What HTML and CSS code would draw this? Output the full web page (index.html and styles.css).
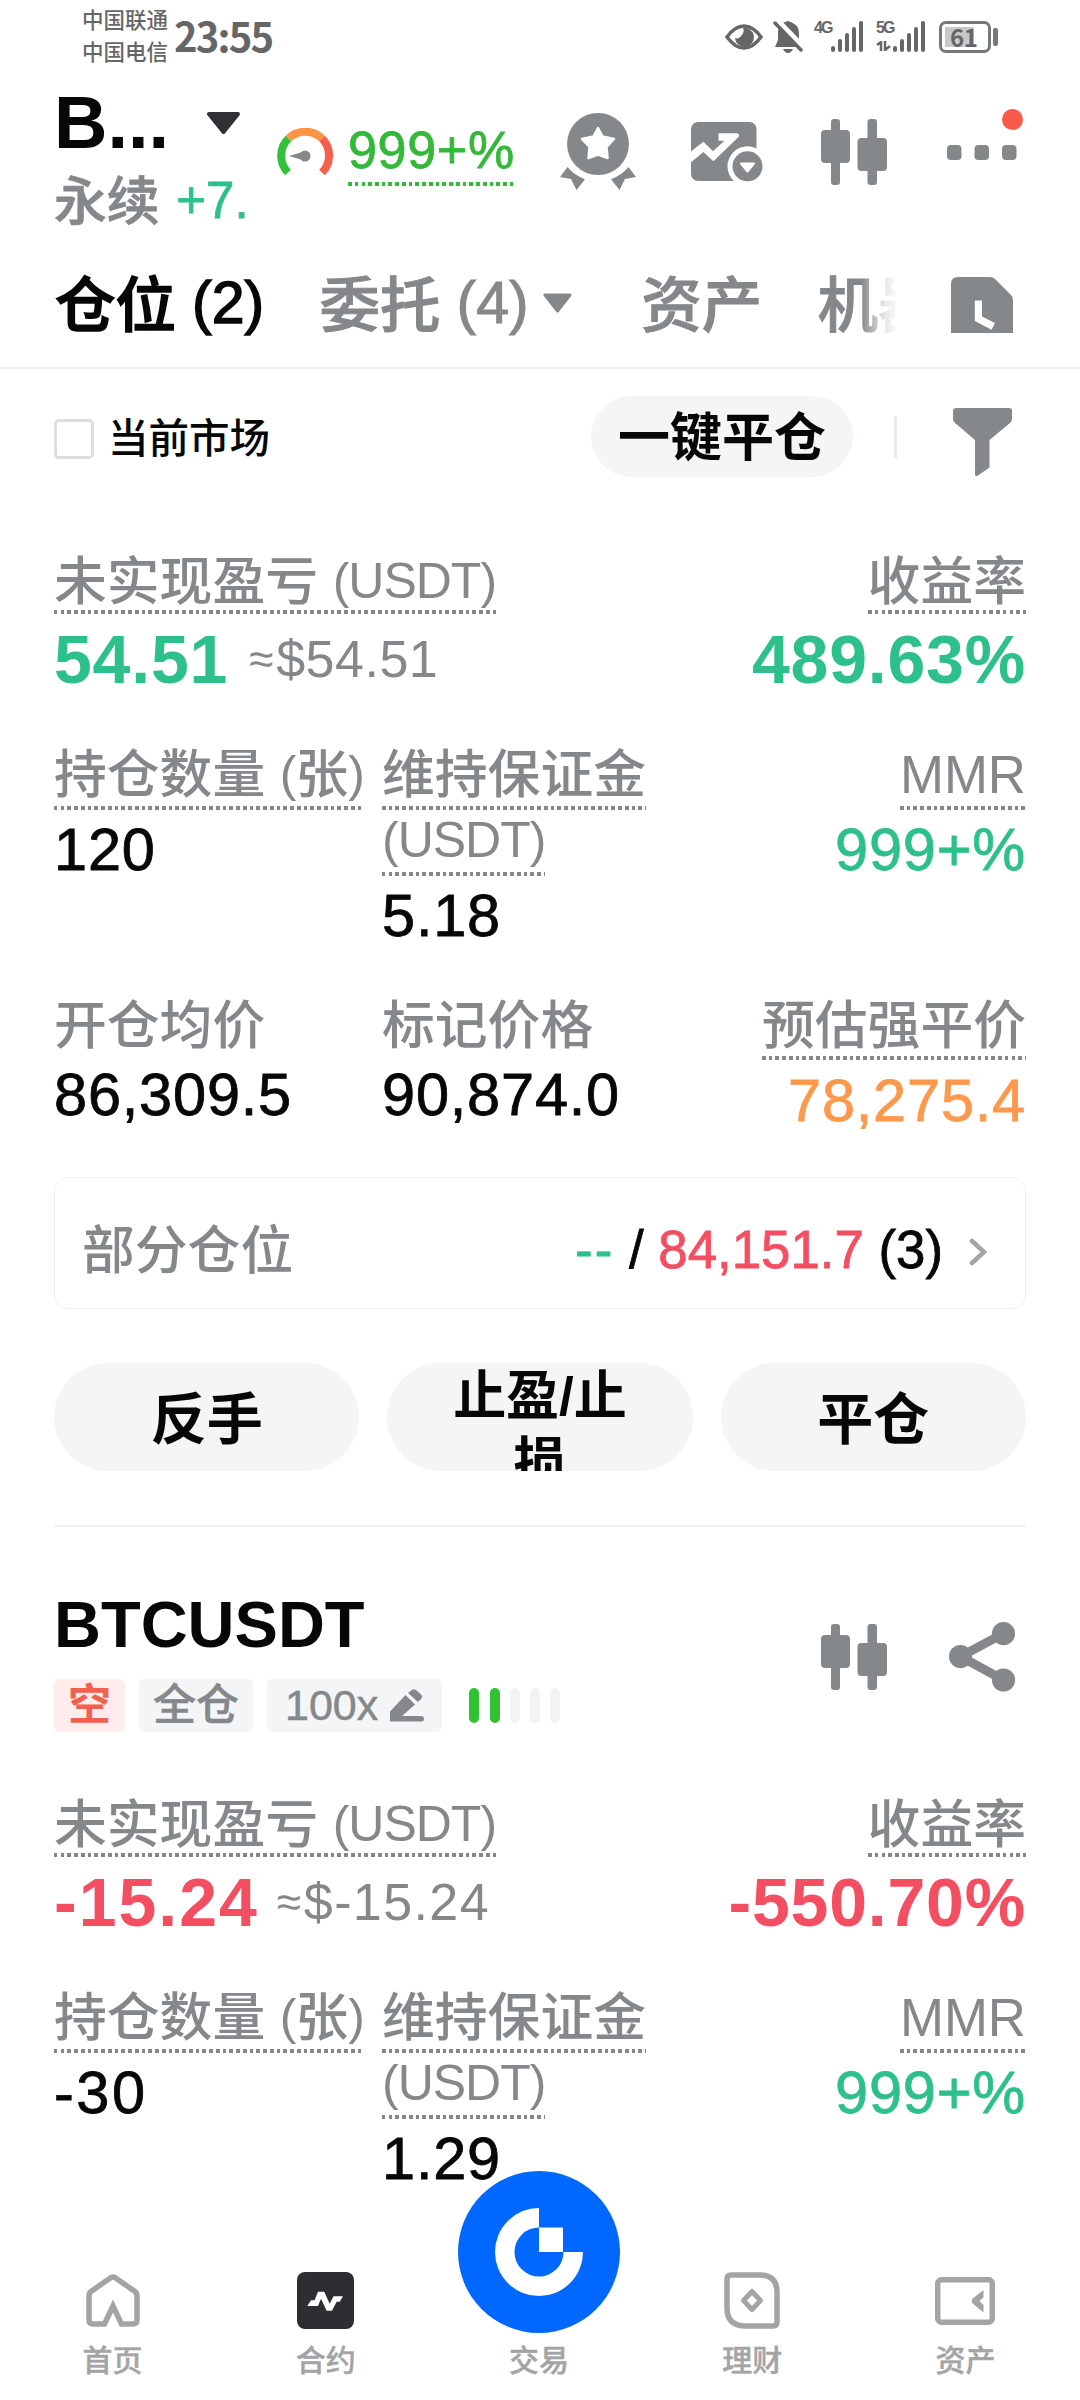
FILE: index.html
```html
<!DOCTYPE html>
<html lang="zh-CN">
<head>
    <meta charset="UTF-8">
    <meta name="viewport" content="width=device-width, initial-scale=1.0">
    <title>合约仓位</title>
    <link rel="stylesheet" href="styles.css">
</head>
<body>
    <!-- Shared icons -->
    <svg width="0" height="0" class="defs">
        <symbol id="candles" viewBox="0 0 66 66">
            <rect x="10" y="0" width="9" height="66" rx="3"/>
            <rect x="0" y="11" width="29" height="33" rx="4"/>
            <rect x="46.5" y="0" width="9.5" height="66" rx="3"/>
            <rect x="36.5" y="19" width="29.5" height="33" rx="4"/>
        </symbol>
        <symbol id="bars" viewBox="0 0 33 31">
            <rect x="0" y="25" width="4" height="6" rx="2"/>
            <rect x="7" y="18" width="4" height="13" rx="2"/>
            <rect x="14" y="12" width="4" height="19" rx="2"/>
            <rect x="21" y="6" width="4" height="25" rx="2"/>
            <rect x="28" y="0" width="4" height="31" rx="2"/>
        </symbol>
    </svg>

    <div class="status-bar">
        <div class="carriers">
            <div>中国联通</div>
            <div>中国电信</div>
        </div>
        <div class="clock">23:55</div>
        <div class="status-icons">
            <svg width="38" height="26" viewBox="0 0 38 26">
                <path class="outline" d="M2 13 Q10 2 19 2 T36 13 Q28 24 19 24 T2 13Z" stroke="#666" stroke-width="3.5"/>
                <path d="M18 4 A9.500 9.500 0 1 1 10 14 Q14 15.500 16 12 Q20 8 18 4Z"/>
            </svg>
            <svg class="bell" width="30" height="33" viewBox="0 0 30 33">
                <path d="M2 27 L5 20 V12 Q5 3 15 1 Q26 4 26 13 V20 L28 27Z"/>
                <path d="M10 29 H20 Q18 33 15 33 T10 29Z"/>
                <path d="M3 0 L30 28" stroke="#fff" stroke-width="7"/>
                <path d="M2 3 L28 30" stroke="#666" stroke-width="3.5" stroke-linecap="round"/>
            </svg>
            <div class="signal">
                <span class="net">4G</span>
                <svg width="33" height="31"><use href="#bars"/></svg>
            </div>
            <div class="signal signal-5g">
                <span class="net">5G
                    <svg class="updown" width="15" height="10" viewBox="0 0 15 10"><path class="outline" d="M1 4 L5 1 V10 M9 0 V9 L14 5" stroke="#666" stroke-width="2.5"/></svg>
                </span>
                <svg width="33" height="31"><use href="#bars"/></svg>
            </div>
            <div class="battery">61</div>
        </div>
    </div>

    <header class="header">
        <div class="pair">
            <div class="pair-name">B...
                <svg width="33" height="22" viewBox="0 0 33 22"><path d="M2 2 H31 L16.500 20Z" fill="#303135" stroke="#303135" stroke-width="4" stroke-linejoin="round"/></svg>
            </div>
            <div class="pair-sub">永续 <span class="up">+7.</span></div>
        </div>
        <svg class="gauge" width="56" height="48" viewBox="0 0 56 48" stroke-width="8">
            <path class="outline" d="M11.500 10.500 A24 24 0 0 1 45 10.500" stroke="#ff9544"/>
            <path class="outline" d="M11 44.500 A24 24 0 0 1 11.500 10.500" stroke="#31c037"/>
            <path class="outline" d="M45 10.500 A24 24 0 0 1 45 44.500" stroke="#f65f4f"/>
            <path class="needle" d="M12 28 L27 23.500 V32.500Z"/>
            <circle class="needle" cx="28" cy="28" r="5.5"/>
        </svg>
        <div class="ratio"><span class="dotted">999+%</span></div>
        <svg class="medal" width="76" height="78" viewBox="0 0 76 78">
            <circle cx="38" cy="31" r="31"/>
            <path d="M7.500 54 Q14 62 25 66.300 L16.500 77 L11 66 L0 64Z"/>
            <path d="M68.500 54 Q62 62 51 66.300 L59.500 77 L65 66 L76 64Z"/>
            <path d="M38 15 L42.500 23.500 L54 26 L46.500 34 L47.500 45 L38 41.500 L28.500 45 L29.500 34 L22 26 L33.500 23.500Z" fill="#fff" stroke="#fff" stroke-width="2.5" stroke-linejoin="round"/>
        </svg>
        <svg class="trend" width="72" height="60" viewBox="0 0 72 60">
            <rect width="65.5" height="59" rx="7"/>
            <path d="M0 29.500 L12.400 19.700 L22 29.300 L33.400 18.700 H27.500 V11.300 H46 Q49 12 47.500 15 L22.400 39.300 L12.400 30 L0 40.300Z" fill="#fff"/>
            <circle cx="56.5" cy="44.3" r="20" fill="#fff"/>
            <circle cx="56.5" cy="44.3" r="15"/>
            <path d="M50 41.500 H63 L56.500 49.500Z" fill="#fff" stroke="#fff" stroke-width="2" stroke-linejoin="round"/>
        </svg>
        <svg class="chart" width="66" height="66"><use href="#candles"/></svg>
        <div class="more">
            <svg width="70" height="15" viewBox="0 0 70 15">
                <rect width="14.5" height="15" rx="4"/>
                <rect x="27.5" width="14.5" height="15" rx="4"/>
                <rect x="55" width="14.5" height="15" rx="4"/>
            </svg>
            <span class="badge"></span>
        </div>
    </header>

    <nav class="tabs">
        <div class="tab-list">
            <div class="tab active">仓位<span class="count">(2)</span></div>
            <div class="tab">委托<span class="count">(4)</span><svg class="caret" width="29" height="20" viewBox="0 0 29 20"><path d="M2 2 H27 L14.500 18Z" stroke="#85888b" stroke-width="3" stroke-linejoin="round"/></svg></div>
            <div class="tab">资产</div>
            <div class="tab">机器</div>
        </div>
        <svg class="history" width="62" height="56" viewBox="0 0 62 56">
            <path d="M0 56 V7 Q0 0 7 0 H39 Q42 0 44 2 L60 18 Q62 20 62 23 V56Z"/>
            <path d="M23.800 23.500 H31 V39.500 L44 46 L40.600 52.700 L23.800 44Z" fill="#fff"/>
        </svg>
    </nav>

    <main class="content">
        <div class="filter-row">
            <span class="checkbox"></span>
            <span class="checkbox-label">当前市场</span>
            <button class="close-all">一键平仓</button>
            <span class="divider"></span>
            <svg width="59" height="68" viewBox="0 0 59 68">
                <path d="M3 0 H56 Q59 0 59 3 V11 Q59 13 57 15 L36.500 32 V59.500 L25 67.500 Q22 69 22 66 V32 L2 15 Q0 13 0 11 V3 Q0 0 3 0Z"/>
            </svg>
        </div>

        <section class="position first">
            <div class="row summary">
                <div class="cell">
                    <div class="label"><span class="dotted">未实现盈亏 <span class="en">(USDT)</span></span></div>
                    <div class="pnl up">54.51 <span class="approx"><i>≈</i>$54.51</span></div>
                </div>
                <div class="cell right">
                    <div class="label"><span class="dotted">收益率</span></div>
                    <div class="pnl up">489.63%</div>
                </div>
            </div>

            <div class="row margin-row">
                <div class="cell">
                    <div class="label"><span class="dotted">持仓数量 <span class="en">(</span>张<span class="en">)</span></span></div>
                    <div class="value">120</div>
                </div>
                <div class="cell">
                    <div class="label"><span class="dotted">维持保证金 <span class="en">(USDT)</span></span></div>
                    <div class="value">5.18</div>
                </div>
                <div class="cell right">
                    <div class="label"><span class="dotted">MMR</span></div>
                    <div class="value up">999+%</div>
                </div>
            </div>

            <div class="row price-row">
                <div class="cell">
                    <div class="label">开仓均价</div>
                    <div class="value">86,309.5</div>
                </div>
                <div class="cell">
                    <div class="label">标记价格</div>
                    <div class="value">90,874.0</div>
                </div>
                <div class="cell right">
                    <div class="label"><span class="dotted">预估强平价</span></div>
                    <div class="value warn">78,275.4</div>
                </div>
            </div>

            <div class="partial">
                <span class="partial-label">部分仓位</span>
                <span class="partial-value"><span class="up dash">--</span> / <span class="down">84,151.7</span> (3)</span>
                <svg width="19" height="28" viewBox="0 0 19 28"><path class="outline" d="M3 3 L15 14 L3 25" stroke="#a3a4a6" stroke-width="4.5" stroke-linecap="round"/></svg>
            </div>

            <div class="actions">
                <button>反手</button>
                <button class="wrap">止盈/止损</button>
                <button>平仓</button>
            </div>
        </section>

        <section class="position">
            <div class="position-head">
                <div class="position-title">
                    <div class="symbol">BTCUSDT</div>
                    <div class="tags">
                        <span class="tag short">空</span>
                        <span class="tag">全仓</span>
                        <span class="tag leverage">100x
                            <svg width="34" height="33" viewBox="0 0 34 33"><path d="M15.500 6 L25 15.500 L12 27 H31 Q34 27 34 30 T31 32.500 H0 V22.500Z"/><path d="M18 4 L22 .8 Q24 -.5 26 1 L31 5.500 Q33 7.500 31.500 9.500 L28 13Z"/></svg>
                        </span>
                        <span class="risk"><i class="on"></i><i class="on"></i><i></i><i></i><i></i></span>
                    </div>
                </div>
                <svg width="66" height="66"><use href="#candles"/></svg>
                <svg class="share" width="67" height="70" viewBox="0 0 67 70">
                    <path class="outline" d="M54.500 11.500 L11.500 34.500 L54.500 58" stroke="#85888b" stroke-width="9"/>
                    <circle cx="11.5" cy="34.5" r="11.5"/>
                    <circle cx="54.5" cy="11.6" r="11.6"/>
                    <circle cx="54.5" cy="58" r="11.6"/>
                </svg>
            </div>

            <div class="row summary">
                <div class="cell">
                    <div class="label"><span class="dotted">未实现盈亏 <span class="en">(USDT)</span></span></div>
                    <div class="pnl down negative">-15.24 <span class="approx"><i>≈</i>$-15.24</span></div>
                </div>
                <div class="cell right">
                    <div class="label"><span class="dotted">收益率</span></div>
                    <div class="pnl down">-550.70%</div>
                </div>
            </div>

            <div class="row margin-row">
                <div class="cell">
                    <div class="label"><span class="dotted">持仓数量 <span class="en">(</span>张<span class="en">)</span></span></div>
                    <div class="value negative">-30</div>
                </div>
                <div class="cell">
                    <div class="label"><span class="dotted">维持保证金 <span class="en">(USDT)</span></span></div>
                    <div class="value">1.29</div>
                </div>
                <div class="cell right">
                    <div class="label"><span class="dotted">MMR</span></div>
                    <div class="value up">999+%</div>
                </div>
            </div>
        </section>
    </main>

    <footer class="bottom-nav">
        <div class="nav-item">
            <div class="nav-icon">
                <svg width="54" height="53" viewBox="0 0 54 53"><path class="outline" d="M25 3.500 L5 17.500 Q3 19 3 22 V46 Q3 50 7 50 H18.500 L27 32 L35.500 50 H47 Q51 50 51 46 V22 Q51 19 49 17.500 L29 3.500 Q27 2.500 25 3.500Z" stroke="#a3a4a6" stroke-width="5.5"/></svg>
            </div>
            <span>首页</span>
        </div>
        <div class="nav-item">
            <div class="nav-icon">
                <svg width="57" height="57" viewBox="0 0 57 57"><rect width="57" height="57" rx="8" fill="#2d2e31"/><path d="M10.300 34 L14 28.300 H17.600 L21 19.700 H27.200 L32.700 31.700 L36.500 24.300 H46 L42.700 29.700 H39.600 L35 38.700 H29.600 L24 26.700 L21 34Z" fill="#fff"/></svg>
            </div>
            <span>合约</span>
        </div>
        <div class="nav-item">
            <div class="nav-icon">
                <svg class="trade" width="162" height="162" viewBox="0 0 162 162">
                    <circle cx="81" cy="81" r="81" fill="#0068ff"/>
                    <path d="M81 37 A44 44 0 1 0 125 81 H105.500 A24.500 24.500 0 1 1 81 56.500Z" fill="#fff"/>
                    <rect x="81" y="56.5" width="24" height="24.5" fill="#fff"/>
                </svg>
            </div>
            <span>交易</span>
        </div>
        <div class="nav-item">
            <div class="nav-icon">
                <svg width="56" height="57" viewBox="0 0 56 57" stroke="#a3a4a6" stroke-width="5.5"><path class="outline" d="M7 3 H37 Q53 4 53 20 V50 Q53 54 49 54 H20 Q3 53 3 36 V7 Q3 3 7 3Z"/><path class="outline" d="M28 19.500 L36.500 28.500 L28 37.500 L19.500 28.500Z" stroke-width="5" stroke-linejoin="round"/></svg>
            </div>
            <span>理财</span>
        </div>
        <div class="nav-item">
            <div class="nav-icon">
                <svg width="60" height="48" viewBox="0 0 60 48"><rect class="outline" x="2.7" y="2.7" width="54.6" height="42.6" rx="4" stroke="#a3a4a6" stroke-width="5.5"/><path d="M48.500 13 V20.500 L44.500 24 L48.500 28 V35.500 L37 26 V22Z" fill="#a3a4a6"/></svg>
            </div>
            <span>资产</span>
        </div>
    </footer>
</body>
</html>
```
FILE: styles.css
```css
/* GLOBAL STYLES */
* {
    box-sizing: border-box;
}

body {
    margin: 0;
    width: 1080px;
    height: 2400px;
    overflow: hidden;
    display: flex;
    flex-direction: column;
    background-color: #fff;
    color: #060707;
    font-family: "Liberation Sans", "Noto Sans CJK SC", sans-serif;
    font-weight: 500;
}

svg {
    display: block;
    flex: none;
    fill: #85888b;
}

.outline {
    fill: none;
}

i {
    font-style: normal;
}

button {
    border: none;
    padding: 0 0 6px;
    background-color: #f4f5f7;
    color: #060707;
    font-family: inherit;
    font-weight: 700;
}

.defs {
    position: absolute;
}

.up {
    color: #2ec08a;
}

.down {
    color: #f44e62;
}

.warn {
    color: #fd984c;
}

/* square dots under the labels that open a hint */
.dotted {
    padding-bottom: 3px;
    background: repeating-linear-gradient(to right, currentColor 0 3.5px, transparent 3.5px 6.75px) left bottom / 100% 4px no-repeat;
    -webkit-box-decoration-break: clone;
    box-decoration-break: clone;
}

/* STATUS BAR */
.status-bar {
    height: 64px;
    padding: 5px 82px 0 82px;
    display: flex;
    align-items: flex-start;
    color: #666;
}

.status-bar svg {
    fill: #666;
}

.carriers {
    font-size: 21.5px;
    line-height: 32px;
    width: 92px;
}

.clock {
    font-family: "Noto Sans CJK SC", sans-serif;
    font-size: 40px;
    font-weight: 700;
    line-height: 61px;
    letter-spacing: -1.8px;
}

.status-icons {
    margin-left: auto;
    display: flex;
    padding-top: 15px;
    height: 48px;
    align-items: center;
}

.bell {
    margin: 0 11px 0 10px;
}

.signal {
    display: flex;
    align-items: center;
    height: 31px;
}

.signal-5g {
    margin-left: 12px;
}

.net {
    width: 17px;
    height: 31px;
    font-size: 16px;
    line-height: 14px;
    font-weight: 700;
    letter-spacing: -2px;
}

.updown {
    margin-top: 6px;
}

.battery {
    position: relative;
    width: 52px;
    height: 32px;
    margin: 0 7px 0 13px;
    padding-left: 8px;
    border: 3px solid #777;
    border-radius: 7px;
    background: linear-gradient(to right, #c8c8c8 29px, transparent 29px) 3px 3px / 100% 20px no-repeat;
    font-family: "Noto Sans CJK SC", sans-serif;
    font-size: 24px;
    font-weight: 700;
    line-height: 25px;
    letter-spacing: -0.5px;
}

.battery::after {
    content: "";
    position: absolute;
    top: 4px;
    right: -10px;
    width: 5px;
    height: 18px;
    border-radius: 2px;
    background-color: #777;
}

/* HEADER */
.header {
    height: 176px;
    padding-left: 54px;
    display: flex;
    align-items: center;
}

.pair {
    width: 194px;
    height: 176px;
    padding-top: 18px;
    overflow: hidden;
}

.pair-name {
    display: flex;
    align-items: center;
    gap: 38px;
    height: 82px;
    line-height: 82px;
    font-size: 74px;
    font-weight: 700;
}

.pair-sub {
    font-size: 52.8px;
    line-height: 76px;
    color: #85888b;
    white-space: nowrap;
    -webkit-text-stroke: 0.8px currentColor;
}

.pair-sub .up {
    margin-left: 2px;
    font-size: 51px;
    line-height: 0;
    vertical-align: 2px;
}

.gauge {
    margin-left: 29px;
}

.needle {
    stroke: none;
}

.ratio {
    margin: 0 45px 4px 15px;
    font-size: 52px;
    letter-spacing: 0.7px;
    color: #34b83a;
    -webkit-text-stroke: 0.8px currentColor;
}

.ratio .dotted {
    padding-bottom: 7px;
}

.trend {
    margin-left: 55px;
}

.chart {
    margin: 0 60px 0 58px;
}

.more {
    position: relative;
}

.badge {
    position: absolute;
    top: -36px;
    right: -6px;
    width: 21px;
    height: 21px;
    border-radius: 50%;
    background-color: #fa5a4a;
}

/* TABS */
.tabs {
    display: flex;
    align-items: center;
    height: 129px;
    padding: 4px 0 0 55px;
    border-bottom: 2px solid #f0f0f0;
}

.tab-list {
    display: flex;
    width: 840px;
    margin-right: 56px;
    overflow: hidden;
    -webkit-mask-image: linear-gradient(to right, #000 806px, rgba(0, 0, 0, 0.2) 830px, transparent 846px);
    mask-image: linear-gradient(to right, #000 806px, rgba(0, 0, 0, 0.2) 830px, transparent 846px);
}

.tab {
    flex: none;
    display: flex;
    align-items: center;
    margin-right: 55.5px;
    font-size: 60.5px;
    line-height: 80px;
    color: #85888b;
    -webkit-text-stroke: 1px currentColor;
}

.count {
    margin-left: 16px;
    padding-bottom: 6px;
    font-size: 59px;
}

.tab.active {
    color: #060707;
    -webkit-text-stroke: 1.5px currentColor;
}

.caret {
    margin: 0 14px 6px;
}

.history {
    margin-bottom: 2px;
}

/* FILTER ROW */
.filter-row {
    display: flex;
    align-items: center;
    height: 135px;
    padding: 0 54px;
}

.checkbox {
    width: 40px;
    height: 40px;
    margin-top: 4px;
    border: 3px solid #dedede;
    border-radius: 5px;
}

.checkbox-label {
    margin: 0 0 2px 14px;
    font-size: 40.5px;
}

.close-all {
    width: 262px;
    height: 81px;
    margin-left: auto;
    border-radius: 41px;
    font-size: 52px;
}

.divider {
    width: 3px;
    height: 42px;
    margin: 0 56px 0 41px;
    background-color: #ebebeb;
}

.filter-row svg {
    margin: 11px 14px 0 0;
}

/* POSITIONS */
.content {
    flex: 1;
    min-height: 0;
}

.position {
    margin: 0 54px;
    padding-top: 63px;
}

.position.first {
    padding: 48px 0 54px;
    border-bottom: 2px solid #f0f0f0;
}

.row {
    display: grid;
    grid-template-columns: 328px 339px 1fr;
}

.row.summary {
    grid-template-columns: 1fr auto;
}

.right {
    text-align: right;
}

.right .label,
.right .value {
    white-space: nowrap;
}

.label {
    font-size: 52.8px;
    line-height: 60px;
    color: #85888b;
}

.en {
    font-size: 50px;
    line-height: 0;
    letter-spacing: -1px;
    vertical-align: 2px;
}

.pnl {
    display: flex;
    align-items: center;
    height: 94px;
    font-size: 68px;
    line-height: 94px;
    font-weight: 700;
    letter-spacing: 0.8px;
}

.pnl.negative {
    letter-spacing: 2px;
}

.right .pnl {
    justify-content: flex-end;
}

.approx {
    display: flex;
    align-items: center;
    margin-left: 21px;
    font-size: 52px;
    font-weight: 400;
    letter-spacing: 0.5px;
    color: #85888b;
}

.negative .approx {
    margin-left: 18px;
    letter-spacing: 1.4px;
}

.approx i {
    width: 27px;
    font-size: 44px;
}

.value {
    height: 84px;
    font-size: 59.5px;
    line-height: 84px;
    letter-spacing: 0.8px;
    -webkit-text-stroke: 0.8px currentColor;
}

.value.negative {
    letter-spacing: 2.5px;
}

.margin-row {
    margin-top: 36px;
}

.margin-row .label {
    line-height: 66px;
}

.margin-row .dotted {
    padding-bottom: 6px;
}

.price-row {
    margin-top: 38px;
}

.price-row .value {
    height: 90px;
    line-height: 78px;
}

.price-row .right .value {
    line-height: 90px;
}

.price-row .dotted {
    padding-bottom: 5px;
}

.partial {
    display: flex;
    align-items: center;
    height: 132px;
    margin-top: 31px;
    padding: 0 37px 0 27px;
    border: 1px solid #efefef;
    border-radius: 14px;
    font-size: 52.8px;
}

.partial-label {
    padding-top: 5px;
    color: #85888b;
}

.partial-value {
    margin: 0 26px 0 auto;
    padding-top: 12px;
    -webkit-text-stroke: 0.8px currentColor;
}

.dash {
    letter-spacing: 2px;
}

.partial svg {
    margin-top: 18px;
}

.actions {
    display: grid;
    grid-template-columns: repeat(3, 1fr);
    gap: 28px;
    margin-top: 54px;
}

.actions button {
    min-width: 0;
    height: 108px;
    border-radius: 54px;
    overflow: hidden;
    font-size: 56px;
}

.actions .wrap {
    display: flex;
    align-items: flex-start;
    padding: 1px 60px 0;
    font-size: 53px;
    line-height: 66px;
}

.position-head {
    display: flex;
    align-items: center;
    height: 142px;
    margin-bottom: 63px;
}

.position-title {
    flex: 1;
}

.position-head > svg {
    margin-bottom: 9px;
}

.position-head .share {
    margin: 0 10px 9px 62px;
}

.symbol {
    font-size: 65px;
    line-height: 70px;
    font-weight: 700;
}

.tags {
    display: flex;
    gap: 14px;
    margin-top: 19px;
}

.tag {
    display: flex;
    align-items: center;
    height: 53px;
    padding: 0 14px 1px;
    border-radius: 6px;
    background-color: #f4f5f7;
    color: #85888b;
    font-size: 43px;
    line-height: 49px;
    -webkit-text-stroke: 0.5px currentColor;
}

.tag.short {
    background-color: #ffeceb;
    color: #f0624f;
    font-weight: 700;
    -webkit-text-stroke: 0;
}

.leverage {
    gap: 12px;
    padding: 0 18px;
}

.risk {
    display: flex;
    align-items: center;
    gap: 10.3px;
    margin-left: 13px;
}

.risk i {
    width: 10px;
    height: 35px;
    border-radius: 5px;
    background-color: #f1f3f4;
}

.risk .on {
    background-color: #2fc234;
}

/* BOTTOM NAV */
.bottom-nav {
    display: flex;
    height: 210px;
    padding: 82px 8px 0 6px;
}

.nav-item {
    flex: 1;
    display: flex;
    flex-direction: column;
    align-items: center;
    gap: 14px;
    font-size: 30px;
    line-height: 36px;
    color: #a3a4a6;
    -webkit-text-stroke: 0.4px currentColor;
}

.nav-icon {
    position: relative;
    display: flex;
    align-items: center;
    justify-content: center;
    width: 60px;
    height: 57px;
}

/* round button sits over the top edge of the bar */
.trade {
    position: absolute;
    top: -101px;
    left: -51px;
}
```
